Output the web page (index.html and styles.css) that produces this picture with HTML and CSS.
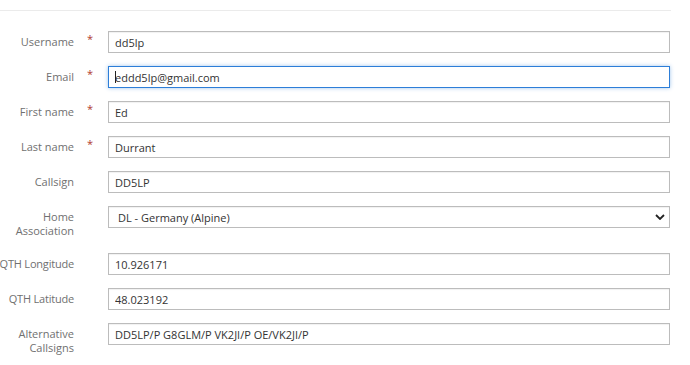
FILE: index.html
```html
<!DOCTYPE html>
<html lang="en">
<head>
    <meta charset="UTF-8">
    <meta name="viewport" content="width=device-width, initial-scale=1.0">
    <title>Profile</title>
    <link rel="stylesheet" href="styles.css">
</head>
<body>
    <hr class="divider">

    <form class="profile-form">
        <div class="form-row">
            <label class="field-label" for="username">Username</label>
            <span class="required">*</span>
            <input class="field-input" id="username" type="text" value="dd5lp">
        </div>

        <div class="form-row">
            <label class="field-label" for="email">Email</label>
            <span class="required">*</span>
            <div class="input-wrap">
                <input class="field-input focused" id="email" type="text" value="eddd5lp@gmail.com">
                <span class="caret"></span>
            </div>
        </div>

        <div class="form-row">
            <label class="field-label" for="firstname">First name</label>
            <span class="required">*</span>
            <input class="field-input" id="firstname" type="text" value="Ed">
        </div>

        <div class="form-row">
            <label class="field-label" for="lastname">Last name</label>
            <span class="required">*</span>
            <input class="field-input" id="lastname" type="text" value="Durrant">
        </div>

        <div class="form-row">
            <label class="field-label" for="callsign">Callsign</label>
            <span class="required"></span>
            <input class="field-input" id="callsign" type="text" value="DD5LP">
        </div>

        <div class="form-row">
            <label class="field-label" for="association">Home Association</label>
            <span class="required"></span>
            <select class="field-input field-select" id="association">
                <option>DL - Germany (Alpine)</option>
                <option>DM - Germany (Low Mountains)</option>
                <option>OE - Austria</option>
            </select>
        </div>

        <div class="form-row">
            <label class="field-label one-line" for="longitude">QTH Longitude</label>
            <span class="required"></span>
            <input class="field-input" id="longitude" type="text" value="10.926171">
        </div>

        <div class="form-row">
            <label class="field-label one-line" for="latitude">QTH Latitude</label>
            <span class="required"></span>
            <input class="field-input" id="latitude" type="text" value="48.023192">
        </div>

        <div class="form-row">
            <label class="field-label" for="altcalls">Alternative Callsigns</label>
            <span class="required"></span>
            <input class="field-input" id="altcalls" type="text" value="DD5LP/P G8GLM/P VK2JI/P OE/VK2JI/P">
        </div>
    </form>
</body>
</html>
```

FILE: styles.css
```css
body {
    margin: 0;
    background: #ffffff;
    font-family: "Open Sans", "Noto Sans", sans-serif;
    font-size: 11px;
    color: #333333;
}

.divider {
    width: 671px;
    margin: 10px 0 0 0;
    border: 0;
    border-top: 1px solid #ebebeb;
}

.profile-form {
    padding: 20px 20px 0 0;
}

.form-row {
    display: grid;
    grid-template-columns: 74px 34px 1fr;
    align-items: start;
    margin-bottom: 13px;
}

.field-label {
    text-align: right;
    color: #707070;
    line-height: 14px;
    padding: 4px 0 2px 0;
}

.field-label.one-line {
    white-space: nowrap;
    letter-spacing: -0.2px;
    justify-self: end;
}

.required {
    color: #b03a2e;
    font-size: 11px;
    line-height: 14px;
    padding: 1px 0 0 13px;
}

.input-wrap {
    position: relative;
}

.field-input {
    box-sizing: border-box;
    width: 100%;
    height: 22px;
    margin: 0;
    padding: 0 6px;
    border: 1px solid #bcbcbc;
    border-radius: 0;
    background: #ffffff;
    font-family: inherit;
    font-size: 11px;
    color: #333333;
    box-shadow: inset 0 1px 1px rgba(0, 0, 0, 0.06);
    outline: none;
}

.field-input.focused {
    border-color: #2d7ed8;
    box-shadow: 0 0 4px rgba(45, 126, 216, 0.45);
}

.caret {
    position: absolute;
    left: 7px;
    top: 5px;
    width: 1px;
    height: 12px;
    background: #222222;
}

.field-select {
    appearance: none;
    -webkit-appearance: none;
    padding-left: 9px;
    background-image: url("data:image/svg+xml,%3Csvg xmlns='http://www.w3.org/2000/svg' width='10' height='6' viewBox='0 0 10 6'%3E%3Cpath d='M1 1l4 4 4-4' fill='none' stroke='%23222' stroke-width='1.8'/%3E%3C/svg%3E");
    background-repeat: no-repeat;
    background-position: right 4px center;
}
```
